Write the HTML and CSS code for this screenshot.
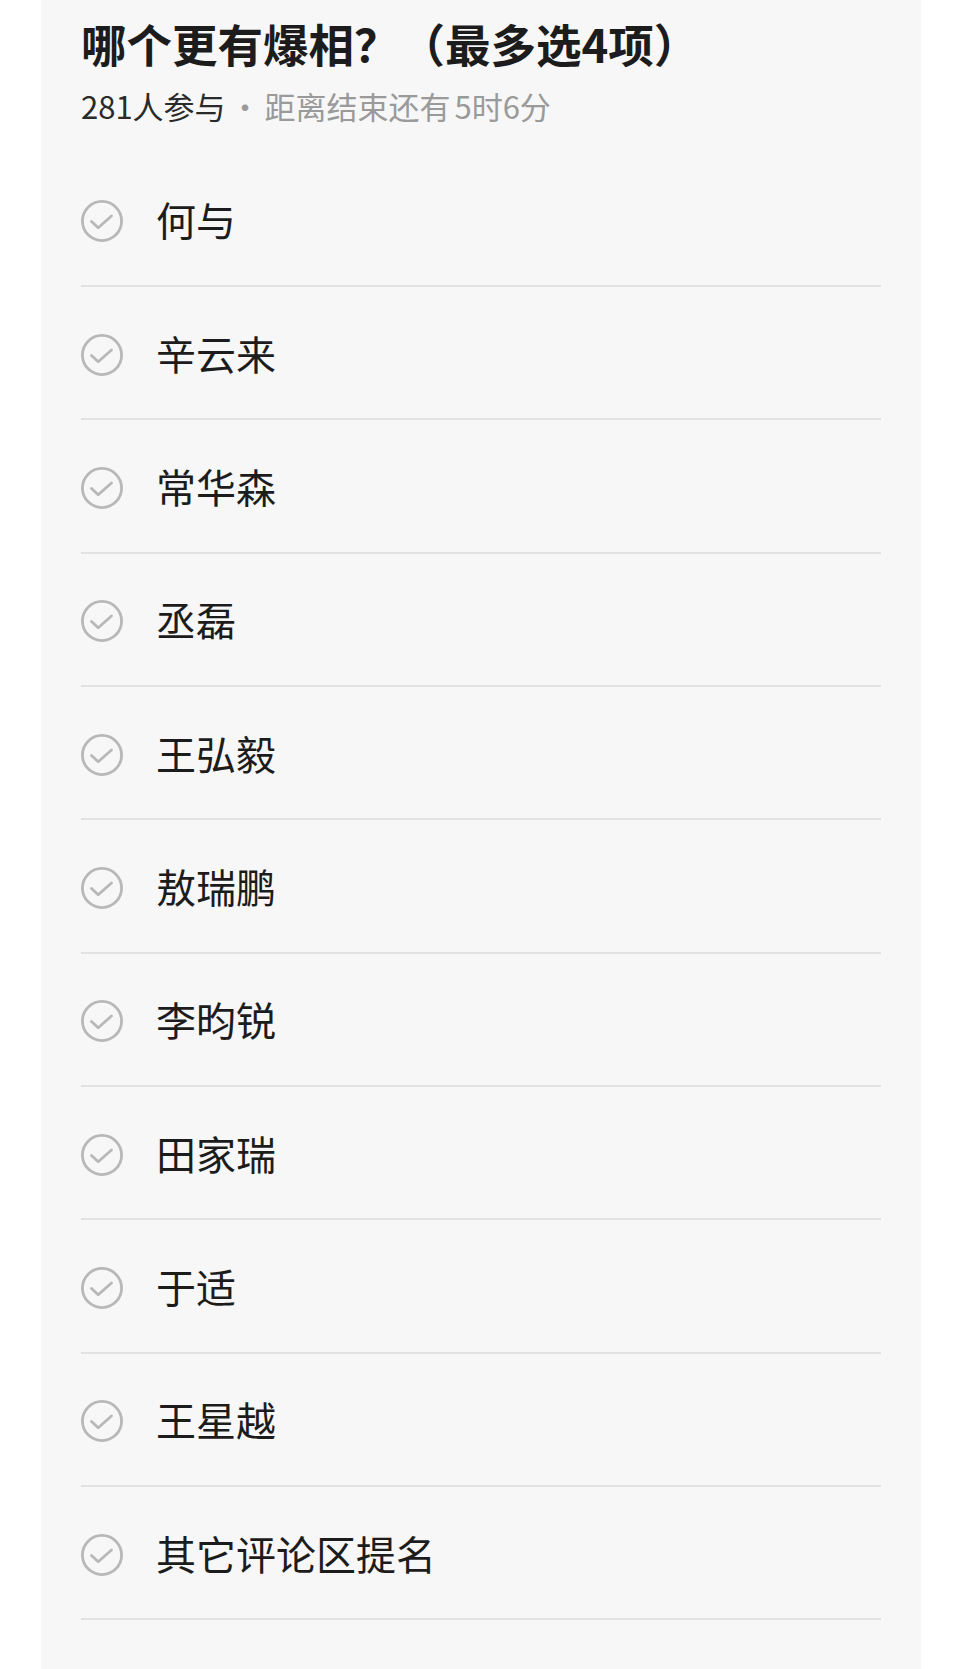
FILE: index.html
```html
<!DOCTYPE html>
<html lang="zh">
<head>
<meta charset="utf-8">
<link rel="stylesheet" href="styles.css">
</head>
<body>
<div class="card">
  <div class="head">
    <h1 class="title">哪个更有爆相？（最多选4项）</h1>
    <p class="meta"><span class="count">281人参与</span><span class="rest"> · 距离结束还有 5时6分</span></p>
  </div>
  <ul class="options">
    <li class="opt"><svg class="chk" viewBox="0 0 42 42"><circle cx="21" cy="21" r="19.6"/><path d="M10.5 21.5 L17.2 27.8 L30.5 16"/></svg><span class="label">何与</span></li>
    <li class="opt"><svg class="chk" viewBox="0 0 42 42"><circle cx="21" cy="21" r="19.6"/><path d="M10.5 21.5 L17.2 27.8 L30.5 16"/></svg><span class="label">辛云来</span></li>
    <li class="opt"><svg class="chk" viewBox="0 0 42 42"><circle cx="21" cy="21" r="19.6"/><path d="M10.5 21.5 L17.2 27.8 L30.5 16"/></svg><span class="label">常华森</span></li>
    <li class="opt"><svg class="chk" viewBox="0 0 42 42"><circle cx="21" cy="21" r="19.6"/><path d="M10.5 21.5 L17.2 27.8 L30.5 16"/></svg><span class="label">丞磊</span></li>
    <li class="opt"><svg class="chk" viewBox="0 0 42 42"><circle cx="21" cy="21" r="19.6"/><path d="M10.5 21.5 L17.2 27.8 L30.5 16"/></svg><span class="label">王弘毅</span></li>
    <li class="opt"><svg class="chk" viewBox="0 0 42 42"><circle cx="21" cy="21" r="19.6"/><path d="M10.5 21.5 L17.2 27.8 L30.5 16"/></svg><span class="label">敖瑞鹏</span></li>
    <li class="opt"><svg class="chk" viewBox="0 0 42 42"><circle cx="21" cy="21" r="19.6"/><path d="M10.5 21.5 L17.2 27.8 L30.5 16"/></svg><span class="label">李昀锐</span></li>
    <li class="opt"><svg class="chk" viewBox="0 0 42 42"><circle cx="21" cy="21" r="19.6"/><path d="M10.5 21.5 L17.2 27.8 L30.5 16"/></svg><span class="label">田家瑞</span></li>
    <li class="opt"><svg class="chk" viewBox="0 0 42 42"><circle cx="21" cy="21" r="19.6"/><path d="M10.5 21.5 L17.2 27.8 L30.5 16"/></svg><span class="label">于适</span></li>
    <li class="opt"><svg class="chk" viewBox="0 0 42 42"><circle cx="21" cy="21" r="19.6"/><path d="M10.5 21.5 L17.2 27.8 L30.5 16"/></svg><span class="label">王星越</span></li>
    <li class="opt"><svg class="chk" viewBox="0 0 42 42"><circle cx="21" cy="21" r="19.6"/><path d="M10.5 21.5 L17.2 27.8 L30.5 16"/></svg><span class="label">其它评论区提名</span></li>
  </ul>
</div>
</body>
</html>
```

FILE: styles.css
```css
html, body {
  margin: 0;
  padding: 0;
  background: #ffffff;
}
body {
  font-family: "Noto Sans CJK SC", "Noto Sans", sans-serif;
  color: #1c1c1c;
}
.card {
  margin-left: 41px;
  width: 880px;
  min-height: 1669px;
  box-sizing: border-box;
  padding: 0 40px;
  background: #f7f7f7;
}
.head {
  padding-top: 15px;
  height: 153.5px;
  box-sizing: border-box;
}
.title {
  margin: 0;
  font-size: 45.5px;
  line-height: 56px;
  font-weight: 700;
  color: #1c1c1c;
}
.meta {
  margin: 15px 0 0;
  font-size: 31px;
  line-height: 40px;
  word-spacing: -3px;
}
.count {
  color: #2a2a2a;
}
.rest {
  color: #9a9a9a;
}
.options {
  list-style: none;
  margin: 0;
  padding: 0;
}
.opt {
  display: flex;
  align-items: center;
  height: 133.35px;
  box-sizing: border-box;
  border-bottom: 2px solid #e2e2e2;
}
.chk {
  width: 42px;
  height: 42px;
  margin-top: 4px;
  flex: none;
  fill: none;
  stroke: #b8b8b8;
  stroke-width: 2.8;
  stroke-linecap: round;
  stroke-linejoin: round;
}
.label {
  margin-left: 33px;
  font-size: 40px;
  line-height: 48px;
  color: #1c1c1c;
}
```
